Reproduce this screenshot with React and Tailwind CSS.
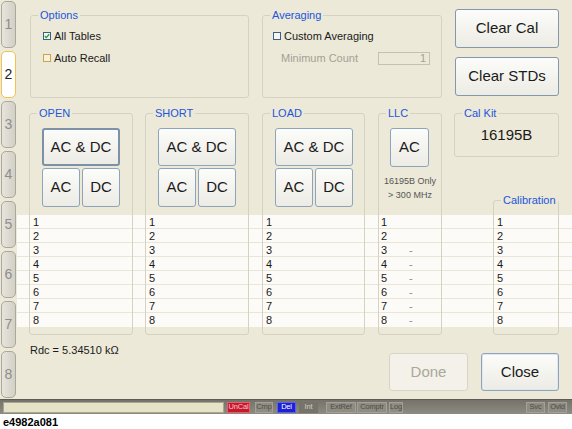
import React from "react";

const rows = [1, 2, 3, 4, 5, 6, 7, 8];

const Group = ({ label, className, children }) => (
  <div className={`relative border border-[#d6d2c1] rounded-[3px] ${className}`}>
    <span className="absolute -top-[7px] left-[7px] px-[2px] bg-[#ece9d8] text-[11px] leading-[13px] text-[#2156dc]">
      {label}
    </span>
    {children}
  </div>
);

const Btn = ({ children, className = "", strong }) => (
  <div
    className={`flex items-center justify-center rounded-[3px] bg-gradient-to-b from-[#fcfcfa] to-[#ecebe4] text-[15px] text-[#1a1a1a] ${
      strong ? "border-2 border-[#7d92a8]" : "border border-[#8ea4bc]"
    } ${className}`}
  >
    {children}
  </div>
);

const Check = ({ checked, tone }) => (
  <svg width="8" height="8" viewBox="0 0 8 8" className="shrink-0">
    <rect
      x="0.5"
      y="0.5"
      width="7"
      height="7"
      fill={tone === "hover" ? "#f7f1dc" : "#f4f4f0"}
      stroke={tone === "hover" ? "#c9a252" : "#3b5f86"}
    />
    {checked && <path d="M1.8 4 L3.3 5.6 L6.2 2.3" fill="none" stroke="#21a121" strokeWidth="1.3" />}
  </svg>
);

const NumberRows = ({ dash }) => (
  <div className="flex flex-col">
    {rows.map((n) => (
      <div key={n} className="h-[14px] flex text-[11px] leading-[14px] text-[#1a1a1a]">
        <span className="w-[28px]">{n}</span>
        {dash && n > 2 && <span className="text-[#8a8a8a]">-</span>}
      </div>
    ))}
  </div>
);

const StdGroup = ({ label, width, strong }) => (
  <Group label={label} className={`${width} h-[222px] pt-[14px] pl-[12px]`}>
    <div className="flex flex-col gap-[2px] w-[78px]">
      <Btn className="h-[38px]" strong={strong}>
        AC &amp; DC
      </Btn>
      <div className="flex gap-[2px]">
        <Btn className="w-[38px] h-[39px]">AC</Btn>
        <Btn className="w-[38px] h-[39px]">DC</Btn>
      </div>
    </div>
    <div className="mt-[8px] -ml-[9px]">
      <NumberRows />
    </div>
  </Group>
);

const Pill = ({ children, className }) => (
  <div
    className={`h-[11px] flex items-center justify-center text-[7.5px] leading-none tracking-tight border ${className}`}
  >
    {children}
  </div>
);

export default function App() {
  return (
    <div className="w-[572px] h-[429px] bg-white font-['Liberation_Sans',Arial,sans-serif] overflow-hidden">
      <div className="h-[399px] bg-[#ece9d8] flex">
        {/* side tabs */}
        <div className="w-[17px] flex flex-col pt-[1px] gap-[3px]">
          {[1, 2, 3, 4, 5, 6, 7, 8].map((t) => (
            <div
              key={t}
              className={`ml-[1px] w-[15px] h-[47px] rounded-[5px] border flex items-center justify-center text-[14px] ${
                t === 2
                  ? "bg-white border-[#f0c34f] text-[#222]"
                  : "bg-gradient-to-r from-[#e6e4dc] to-[#d3d0c5] border-[#aaa79c] text-[#8d8d8d]"
              }`}
            >
              {t}
            </div>
          ))}
        </div>

        <div className="relative flex-1">
          {/* table band behind the groups */}
          <div className="absolute left-0 right-0 top-[215px] bg-[#fcfbf7]">
            {rows.map((n) => (
              <div key={n} className={`h-[14px] ${n < 8 ? "border-b border-[#e9e6d8]" : ""}`} />
            ))}
          </div>

          <div className="relative flex flex-col">
            {/* top section */}
            <div className="h-[98px] flex items-start pl-[13px]">
              <Group label="Options" className="mt-[15px] w-[219px] h-[83px] pt-[13px] pl-[12px]">
                <div className="h-[14px] flex items-center gap-[3px] text-[11px] text-[#1a1a1a]">
                  <Check checked />
                  All Tables
                </div>
                <div className="mt-[8px] h-[14px] flex items-center gap-[3px] text-[11px] text-[#1a1a1a]">
                  <Check tone="hover" />
                  Auto Recall
                </div>
              </Group>

              <Group label="Averaging" className="ml-[13px] mt-[15px] w-[180px] h-[83px] pt-[13px] pl-[10px]">
                <div className="h-[14px] flex items-center gap-[3px] text-[11px] text-[#1a1a1a]">
                  <Check />
                  Custom Averaging
                </div>
                <div className="mt-[8px] h-[14px] flex items-center text-[11px] text-[#a3a196]">
                  <span className="ml-[8px] w-[97px]">Minimum Count</span>
                  <div className="w-[52px] h-[13px] border border-[#c4c1b1] text-right pr-[3px] leading-[11px]">1</div>
                </div>
              </Group>

              <div className="ml-[13px] mt-[9px] w-[104px] flex flex-col gap-[9px]">
                <Btn className="h-[39px] border-[#8597ad]">Clear Cal</Btn>
                <Btn className="h-[39px] border-[#8597ad]">Clear STDs</Btn>
              </div>
            </div>

            {/* standards section */}
            <div className="flex items-start pl-[12px] mt-[15px]">
              <StdGroup label="OPEN" width="w-[104px]" strong />
              <div className="ml-[12px]">
                <StdGroup label="SHORT" width="w-[104px]" />
              </div>
              <div className="ml-[13px]">
                <StdGroup label="LOAD" width="w-[103px]" />
              </div>

              <Group label="LLC" className="ml-[13px] w-[64px] h-[222px] pt-[14px]">
                <div className="pl-[11px]">
                  <Btn className="w-[39px] h-[39px]">AC</Btn>
                </div>
                <div className="mt-[7px] text-center text-[9px] leading-[14px] text-[#555]">
                  <div>16195B Only</div>
                  <div>&gt; 300 MHz</div>
                </div>
                <div className="mt-[13px] pl-[2px]">
                  <NumberRows dash />
                </div>
              </Group>

              <div className="ml-[12px] w-[105px] flex flex-col">
                <Group label="Cal Kit" className="h-[44px] flex items-center justify-center">
                  <span className="text-[15px] text-[#1a1a1a]">16195B</span>
                </Group>
                <Group label="Calibration" className="mt-[43px] ml-[39px] w-[66px] h-[135px] pt-[14px] pl-[3px]">
                  <NumberRows />
                </Group>
              </div>
            </div>

            {/* bottom section */}
            <div className="flex items-start pl-[13px] pr-[13px]">
              <span className="mt-[8px] text-[11px] leading-[14px] text-[#1a1a1a]">Rdc = 5.34510 kΩ</span>
              <div className="ml-auto mt-[18px] flex gap-[13px]">
                <div className="w-[79px] h-[38px] flex items-center justify-center rounded-[3px] border border-[#d8d5c6] bg-[#f3f1e9] text-[15px] text-[#aaa89b]">
                  Done
                </div>
                <Btn className="w-[78px] h-[38px] border-[#6a8dbd] shadow-[inset_0_0_0_1px_#dfe7f2]">Close</Btn>
              </div>
            </div>
          </div>
        </div>
      </div>

      {/* status bar */}
      <div className="h-[15px] bg-gradient-to-b from-[#75726a] to-[#8e8b82] border-t border-[#5e5b54] flex items-center">
        <div className="ml-[3px] w-[221px] h-[11px] bg-[#e5e2c7] border border-[#a9a690]" />
        <Pill className="ml-[3px] w-[23px] bg-[#c8182c] border-[#e06070] text-[#f6c8cc]">UnCal</Pill>
        <Pill className="ml-[5px] w-[18px] bg-[#8f8c83] border-[#a3a097] text-[#4e4c46]">Cmp</Pill>
        <Pill className="ml-[4px] w-[19px] bg-[#1c20d6] border-[#5a63ea] text-white">Del</Pill>
        <Pill className="ml-[3px] w-[19px] bg-[#76736b] border-[#76736b] text-[#d0cec6]">Int</Pill>
        <Pill className="ml-[8px] w-[30px] bg-[#8f8c83] border-[#a3a097] text-[#4e4c46]">ExtRef</Pill>
        <Pill className="ml-[1px] w-[30px] bg-[#8f8c83] border-[#a3a097] text-[#4e4c46]">Comptr</Pill>
        <Pill className="ml-[2px] w-[14px] bg-[#8f8c83] border-[#a3a097] text-[#4e4c46]">Log</Pill>
        <Pill className="ml-auto w-[19px] bg-[#8f8c83] border-[#a3a097] text-[#4e4c46]">Svc</Pill>
        <Pill className="ml-[3px] mr-[5px] w-[19px] bg-[#8f8c83] border-[#a3a097] text-[#4e4c46]">Ovld</Pill>
      </div>

      <div className="h-[15px] pl-[3px] text-[11px] leading-[16px] font-bold text-black">e4982a081</div>
    </div>
  );
}
